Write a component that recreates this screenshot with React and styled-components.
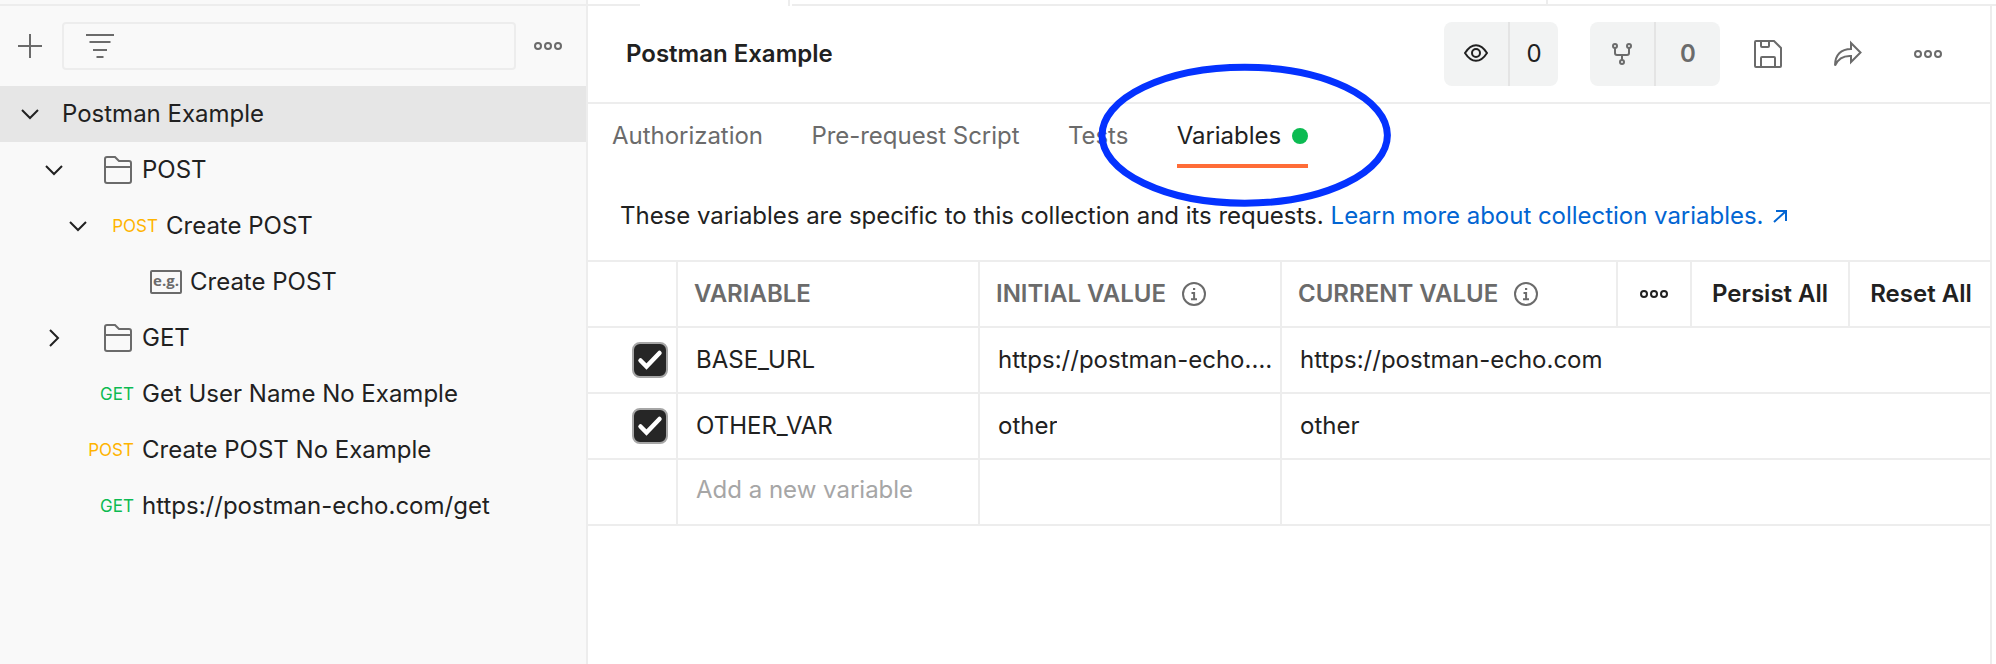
import React from "react";
import styled, { createGlobalStyle } from "styled-components";

const C = {
  ink: "#212121",
  gray: "#6b6b6b",
  faint: "#a6a6a6",
  line: "#ededed",
  side: "#f9f9f9",
  picked: "#e6e6e6",
  chip: "#f2f3f3",
  chipLine: "#e4e4e4",
  green: "#0cbb52",
  amber: "#ffb400",
  orange: "#ff6c37",
  link: "#0265d2",
};

const GlobalStyle = createGlobalStyle`
  * { box-sizing: border-box; }
  body {
    margin: 0;
    background: #fff;
    overflow: hidden;
    color: ${C.ink};
    font: 400 24px/32px Inter, "Liberation Sans", sans-serif;
  }
`;

const Page = styled.div`
  display: grid;
  grid-template-rows: 6px 1fr;
  grid-template-columns: 588px 1fr;
  width: 1996px;
  height: 664px;
`;
const SideEdge = styled.div`
  background: ${C.side};
  border-right: 2px solid ${C.line};
  border-bottom: 2px solid ${C.line};
`;
const TabStrip = styled.div`
  display: flex;
`;
const StripPart = styled.div`
  display: flex;
  justify-content: flex-end;
  width: ${(p) => p.$w}px;
  flex: ${(p) => (p.$w ? "none" : 1)};
  border-bottom: 2px solid ${C.line};
`;
const StripDivider = styled.div`
  width: 2px;
  background: ${C.line};
`;
const OpenTab = styled.div`
  display: flex;
  justify-content: flex-end;
  width: 150px;
  margin-right: 2px;
`;

const Sidebar = styled.aside`
  background: ${C.side};
  border-right: 2px solid ${C.line};
`;
const SideTools = styled.div`
  display: flex;
  align-items: center;
  height: 80px;
  padding: 0 24px 0 18px;
`;
const Filter = styled.div`
  flex: 1;
  display: flex;
  align-items: center;
  height: 48px;
  margin: 0 18px 0 20px;
  padding-left: 22px;
  border: 2px solid ${C.line};
  border-radius: 4px;
`;
const TreeRow = styled.div`
  display: flex;
  align-items: center;
  height: 56px;
  padding-left: ${(p) => p.$indent}px;
  background: ${(p) => (p.$active ? C.picked : "transparent")};
`;
const Slot = styled.div`
  display: flex;
  flex: none;
  justify-content: flex-end;
  width: ${(p) => p.$w}px;
  margin-right: ${(p) => p.$gap || 0}px;
`;
const Label = styled.span`
  white-space: nowrap;
`;
const Method = styled.span`
  font-size: 17px;
  line-height: 24px;
  color: ${(p) => (p.$get ? C.green : C.amber)};
`;
const ExampleTag = styled.span`
  width: 32px;
  height: 24px;
  border: 2px solid ${C.gray};
  border-radius: 2px;
  color: ${C.gray};
  font: 700 15px/17px "Open Sans", sans-serif;
  text-align: center;
`;

const Main = styled.main`
  width: 1404px;
  border-right: 2px solid ${C.line};
`;
const Header = styled.header`
  display: flex;
  align-items: center;
  height: 98px;
  padding: 0 48px 0 38px;
  border-bottom: 2px solid ${C.line};
`;
const Title = styled.h1`
  flex: 1;
  margin: 0;
  font-size: 24px;
  font-weight: 600;
`;
const Chip = styled.div`
  display: flex;
  height: 64px;
  margin-right: ${(p) => p.$gap}px;
  background: ${C.chip};
  border-radius: 8px;
  color: ${(p) => (p.$muted ? C.gray : C.ink)};
  font-weight: ${(p) => (p.$muted ? 600 : 400)};
`;
const ChipCell = styled.div`
  display: flex;
  align-items: center;
  justify-content: center;
  width: ${(p) => p.$w}px;
  & + & { border-left: 2px solid ${C.chipLine}; }
`;
const Actions = styled.div`
  display: flex;
  align-items: center;
  gap: 52px;
`;
const Tabs = styled.nav`
  display: flex;
  gap: 48.400px;
  height: 64px;
  padding-left: 24px;
`;
const Tab = styled.div`
  display: flex;
  align-items: center;
  gap: 11px;
  white-space: nowrap;
  letter-spacing: -0.030px;
  padding-top: 4px;
  color: ${(p) => (p.$active ? C.ink : C.gray)};
  border-bottom: 4px solid ${(p) => (p.$active ? C.orange : "transparent")};
`;
const Dot = styled.span`
  width: 16px;
  height: 16px;
  border-radius: 50%;
  background: ${C.green};
`;
const Note = styled.p`
  display: flex;
  align-items: center;
  height: 92px;
  margin: 0;
  padding: 3px 0 0 32px;
  letter-spacing: -0.025px;
  white-space: nowrap;
`;
const Link = styled.a`
  display: flex;
  align-items: center;
  gap: 10px;
  margin-left: 7px;
  color: ${C.link};
`;

const Table = styled.div`
  border-top: 2px solid ${C.line};
`;
const Row = styled.div`
  display: grid;
  grid-template-columns: ${(p) =>
    p.$head ? "90px 302px 302px 336px 74px 158px 1fr" : "90px 302px 302px 1fr"};
  height: 66px;
  border-bottom: 2px solid ${C.line};
`;
const Cell = styled.div`
  display: flex;
  align-items: center;
  min-width: 0;
  padding-left: 18px;
  white-space: nowrap;
  border-right: 2px solid ${C.line};
  color: ${(p) => (p.$faint ? C.faint : C.ink)};
  padding-bottom: ${(p) => (p.$faint ? 5 : 1)}px;
  &:last-child { border-right: 0; }
`;
const HeadCell = styled(Cell)`
  gap: 16px;
  padding-left: 16px;
  padding-bottom: 0;
  color: ${C.gray};
  font-weight: 600;
`;
const ActionCell = styled(Cell)`
  justify-content: center;
  padding: 0;
  font-weight: 600;
  &:last-child { padding-left: 2px; }
`;
const CheckCell = styled(Cell)`
  justify-content: flex-end;
  padding: 0 8px 0 0;
`;
const Clip = styled.span`
  overflow: hidden;
  text-overflow: ellipsis;
`;
const Box = styled.span`
  display: grid;
  place-items: center;
  width: 36px;
  height: 36px;
  border: 2px solid ${C.faint};
  border-radius: 8px;
  background: #262626;
`;
const Ring = styled.svg`
  position: absolute;
  left: 1098px;
  top: 63px;
`;

const Svg = ({ w, h, color = C.gray, sw = 2, children }) => (
  <svg width={w} height={h} viewBox={`0 0 ${w} ${h}`} fill="none" stroke={color} strokeWidth={sw}>
    {children}
  </svg>
);
const Dots = ({ color }) => (
  <Svg w={28} h={10} color={color}>
    <circle cx="4" cy="5" r="3" />
    <circle cx="14" cy="5" r="3" />
    <circle cx="24" cy="5" r="3" />
  </Svg>
);
const ChevronDown = () => (
  <Svg w={20} h={12} color={C.ink}>
    <path d="M2 2l8 8 8-8" />
  </Svg>
);
const ChevronRight = () => (
  <Svg w={20} h={20} color={C.ink}>
    <path d="M6 2l8 8-8 8" />
  </Svg>
);
const Folder = () => (
  <Svg w={28} h={28}>
    <path d="M1 3a2 2 0 0 1 2-2h8l4 4h10a2 2 0 0 1 2 2v18a2 2 0 0 1-2 2H3a2 2 0 0 1-2-2zM1 11h26" />
  </Svg>
);
const Info = () => (
  <Svg w={24} h={24}>
    <circle cx="12" cy="12" r="11" />
    <path d="M9.500 11h2.600v6M9 17.200h6M11 7h2.200" />
  </Svg>
);

const tree = [
  { name: "Postman Example", indent: 20, chevron: "down", active: true },
  { name: "POST", indent: 44, chevron: "down", folder: true },
  { name: "Create POST", indent: 68, chevron: "down", method: "POST" },
  { name: "Create POST", indent: 150, example: true },
  { name: "GET", indent: 44, chevron: "right", folder: true },
  { name: "Get User Name No Example", indent: 73, method: "GET" },
  { name: "Create POST No Example", indent: 73, method: "POST" },
  { name: "https://postman-echo.com/get", indent: 73, method: "GET" },
];
const variables = [
  ["BASE_URL", "https://postman-echo.com", "https://postman-echo.com"],
  ["OTHER_VAR", "other", "other"],
];

export default function App() {
  return (
    <>
      <GlobalStyle />
      <Page>
        <SideEdge />
        <TabStrip>
          <StripPart $w={52} />
          <OpenTab>
            <StripDivider />
          </OpenTab>
          <StripPart $w={756}>
            <StripDivider />
          </StripPart>
          <StripPart />
        </TabStrip>
        <Sidebar>
          <SideTools>
            <Svg w={24} h={24}>
              <path d="M12 0v24M0 12h24" />
            </Svg>
            <Filter>
              <Svg w={28} h={24}>
                <path d="M0 1h28M3.500 8h21M7 16h14M10.500 23h7" />
              </Svg>
            </Filter>
            <Dots />
          </SideTools>
          {tree.map((n, i) => (
            <TreeRow key={i} $indent={n.indent} $active={n.active}>
              {n.chevron && (
                <Slot $w={20} $gap={n.folder ? 40 : n.method ? 0 : 22}>
                  {n.chevron === "down" ? <ChevronDown /> : <ChevronRight />}
                </Slot>
              )}
              {n.folder && (
                <Slot $w={28} $gap={10}>
                  <Folder />
                </Slot>
              )}
              {n.method && (
                <Slot $w={n.chevron ? 70 : 61} $gap={8}>
                  <Method $get={n.method === "GET"}>{n.method}</Method>
                </Slot>
              )}
              {n.example && (
                <Slot $w={32} $gap={8}>
                  <ExampleTag>e.g.</ExampleTag>
                </Slot>
              )}
              <Label>{n.name}</Label>
            </TreeRow>
          ))}
        </Sidebar>
        <Main>
          <Header>
            <Title>Postman Example</Title>
            <Chip $gap={32}>
              <ChipCell $w={64}>
                <Svg w={24} h={20} color={C.ink}>
                  <path d="M1 9C4.500 3.500 8 1.200 12 1.200S19.500 3.500 23 9C19.500 14.500 16 16.800 12 16.800S4.500 14.500 1 9z" />
                  <circle cx="12" cy="9" r="4" />
                </Svg>
              </ChipCell>
              <ChipCell $w={50}>0</ChipCell>
            </Chip>
            <Chip $muted $gap={34}>
              <ChipCell $w={64}>
                <Svg w={20} h={24}>
                  <circle cx="3" cy="4" r="2" />
                  <circle cx="17" cy="4" r="2" />
                  <circle cx="10" cy="20" r="2" />
                  <path d="M3 6V11a2 2 0 0 0 2 2h10a2 2 0 0 0 2-2V6M10 13v5" />
                </Svg>
              </ChipCell>
              <ChipCell $w={66}>0</ChipCell>
            </Chip>
            <Actions>
              <Svg w={28} h={28}>
                <path d="M2 1h18l7 7v18a1 1 0 0 1-1 1H2a1 1 0 0 1-1-1V2a1 1 0 0 1 1-1zM7 1v5a1 1 0 0 0 1 1h6a1 1 0 0 0 1-1V1M7 27v-9a1 1 0 0 1 1-1h12a1 1 0 0 1 1 1v9" />
              </Svg>
              <Svg w={28} h={28}>
                <path d="M17 3l9.500 9.500L17 22v-6C9 15.500 4 19 1 25.500 1 15 7 9 17 9z" />
              </Svg>
              <Dots />
            </Actions>
          </Header>
          <Tabs>
            <Tab>Authorization</Tab>
            <Tab>Pre-request Script</Tab>
            <Tab>Tests</Tab>
            <Tab $active>
              Variables
              <Dot />
            </Tab>
          </Tabs>
          <Note>
            These variables are specific to this collection and its requests.
            <Link>
              Learn more about collection variables.
              <Svg w={14} h={14} color={C.link}>
                <path d="M3 2h10v10M13 2L1 13" />
              </Svg>
            </Link>
          </Note>
          <Table>
            <Row $head>
              <Cell />
              <HeadCell>VARIABLE</HeadCell>
              <HeadCell>
                INITIAL VALUE <Info />
              </HeadCell>
              <HeadCell>
                CURRENT VALUE <Info />
              </HeadCell>
              <ActionCell>
                <Dots color={C.ink} />
              </ActionCell>
              <ActionCell>Persist All</ActionCell>
              <ActionCell>Reset All</ActionCell>
            </Row>
            {variables.map(([name, initial, current]) => (
              <Row key={name}>
                <CheckCell>
                  <Box>
                    <Svg w={26} h={26} color="#fff" sw={4.5}>
                      <path d="M3.500 13.500l6 6L22.500 6" strokeLinecap="round" />
                    </Svg>
                  </Box>
                </CheckCell>
                <Cell>{name}</Cell>
                <Cell>
                  <Clip>{initial}</Clip>
                </Cell>
                <Cell>{current}</Cell>
              </Row>
            ))}
            <Row>
              <Cell />
              <Cell $faint>Add a new variable</Cell>
              <Cell />
              <Cell />
            </Row>
          </Table>
        </Main>
      </Page>
      <Ring width="294" height="145" viewBox="0 0 294 145" fill="none">
        <ellipse cx="146.700" cy="72.200" rx="142.700" ry="68" stroke="#0432ff" strokeWidth="7" />
      </Ring>
    </>
  );
}
